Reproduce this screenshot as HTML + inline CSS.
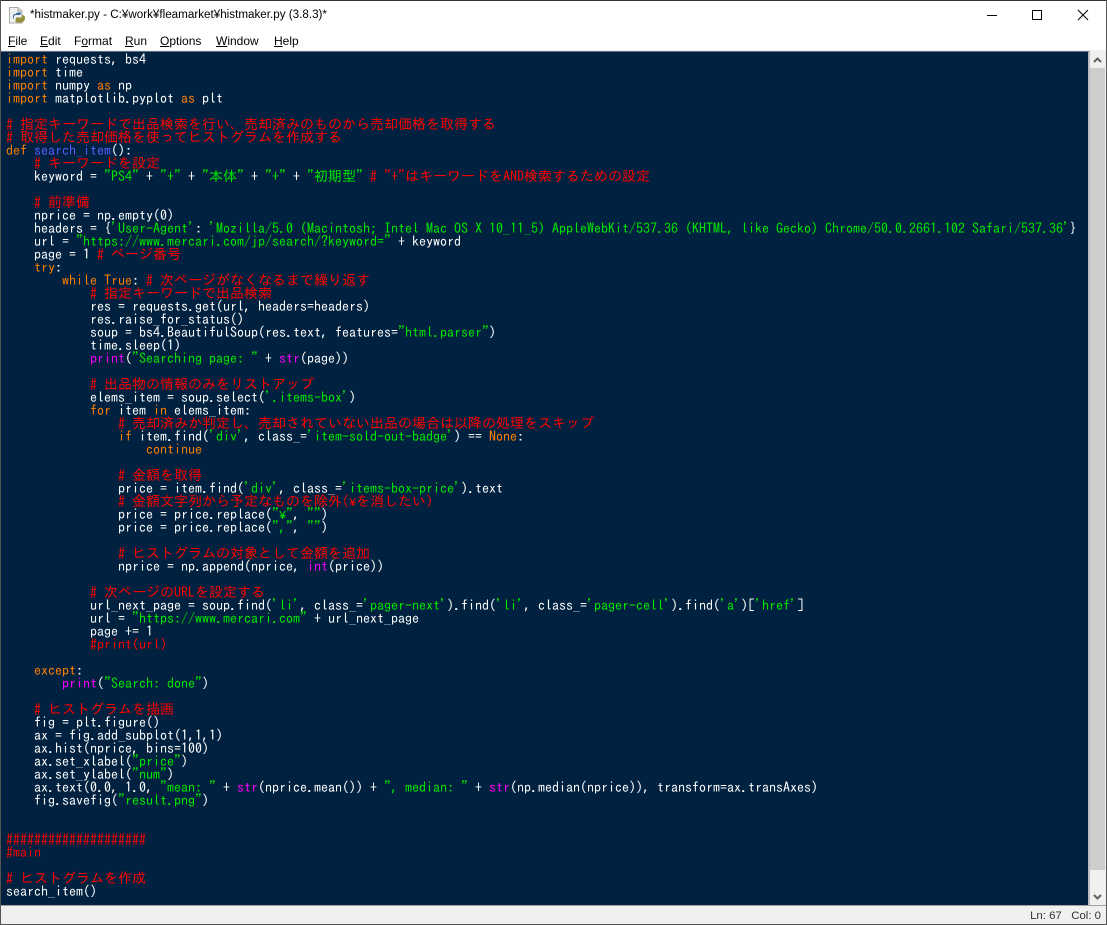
<!DOCTYPE html>
<html lang="ja"><head><meta charset="utf-8"><title>histmaker.py</title>
<style>
html,body{margin:0;padding:0;width:1107px;height:925px;overflow:hidden;background:#fff}
#win{position:absolute;left:0;top:0;width:1107px;height:925px;overflow:hidden;background:#fff}
#bt{position:absolute;left:0;top:0;width:1107px;height:1px;background:#333}
#bl{position:absolute;left:0;top:0;width:1px;height:925px;background:#555;z-index:5}
#br{position:absolute;right:0;top:0;width:1px;height:925px;background:#555;z-index:5}
#bb{position:absolute;left:0;top:924px;width:1107px;height:1px;background:#555;z-index:5}
#title{position:absolute;left:30px;top:6px;font:11.65px/18px "Liberation Sans","Noto Sans CJK JP",sans-serif;color:#000;white-space:pre}
#menu span{position:absolute;top:33px;font:12px/16px "Liberation Sans",sans-serif;color:#000}
#menu u{text-decoration:underline}
#band{position:absolute;left:1px;top:50px;width:1105px;height:1px;background:#f0f0f0}
#ed{position:absolute;left:1px;top:51px;width:1089px;height:854px;background:#002240;border-top:1px solid #607080;border-right:2px solid #b8bec4;box-sizing:border-box}
#code{position:absolute;left:5px;top:1px;margin:0;font:14px/13px "IPAGothic","Noto Sans CJK JP",monospace;color:#fff;white-space:pre}
.k{color:#ff7f00}.c{color:#f00}.s{color:#00e800}.b{color:#f0f}.d{color:#5a5aff}
.y{display:inline-block;width:7px;height:0;font:12px/0 "Liberation Mono",monospace;text-align:center}
#sb{position:absolute;left:1090px;top:51px;width:16px;height:854px;background:#f0f0f0}
#th{position:absolute;left:0;top:17px;width:15px;height:802px;background:#cdcdcd}
#st{position:absolute;left:1px;top:905px;width:1105px;height:19px;background:#f0f0f0;border-top:1px solid #a0a0a0;box-sizing:border-box}
#ln{position:absolute;right:5px;top:3px;font:11.4px/14px "Liberation Sans",sans-serif;color:#333;white-space:pre}
</style></head><body><div id="win">
<div id="bt"></div><div id="bl"></div><div id="br"></div><div id="bb"></div>
<svg style="position:absolute;left:8px;top:6px" width="18" height="18" viewBox="0 0 18 18"><path d="M1.5 1.5H10L14 5V17H1.5Z" fill="#eef0f2" stroke="#a8a8a8"/><path d="M10 1.5V5H14" fill="#d8d8d8" stroke="#a8a8a8"/><path d="M6 13V10.5Q6 9 8 9H11Q13 9 13 7.5V6.5H10Q8 6.5 8 8H7Q5 8 5 10.5T6 13Z" fill="#3d6a9c"/><path d="M8 12.5V11.5H14V9Q17 9 17 12T14 16.5H9Q7.5 16.5 7.5 15V13.5Q7.5 12.5 8 12.5Z" fill="#96903a"/></svg>
<div id="title">*histmaker.py - C:¥work¥fleamarket¥histmaker.py (3.8.3)*</div>
<svg style="position:absolute;left:980px;top:0" width="127" height="32" viewBox="0 0 127 32" fill="none" stroke="#000" shape-rendering="crispEdges"><path d="M7 15.5H17"/><rect x="52.5" y="10.5" width="9" height="9"/><path d="M98 10L108 20M108 10L98 20" shape-rendering="auto"/></svg>
<div id="menu"><span style="left:8px"><u>F</u>ile</span><span style="left:40px"><u>E</u>dit</span><span style="left:74px">F<u>o</u>rmat</span><span style="left:125px"><u>R</u>un</span><span style="left:160px"><u>O</u>ptions</span><span style="left:216px"><u>W</u>indow</span><span style="left:274px"><u>H</u>elp</span></div>
<div id="band"></div>
<div id="ed"><pre id="code"><span class="k">import</span> requests, bs4
<span class="k">import</span> time
<span class="k">import</span> numpy <span class="k">as</span> np
<span class="k">import</span> matplotlib.pyplot <span class="k">as</span> plt

<span class="c"># 指定キーワードで出品検索を行い、売却済みのものから売却価格を取得する</span>
<span class="c"># 取得した売却価格を使ってヒストグラムを作成する</span>
<span class="k">def</span> <span class="d">search_item</span>():
    <span class="c"># キーワードを設定</span>
    keyword = <span class="s">"PS4"</span> + <span class="s">"+"</span> + <span class="s">"本体"</span> + <span class="s">"+"</span> + <span class="s">"初期型"</span> <span class="c"># "+"はキーワードをAND検索するための設定</span>

    <span class="c"># 前準備</span>
    nprice = np.empty(0)
    headers = {<span class="s">'User-Agent'</span>: <span class="s">'Mozilla/5.0 (Macintosh; Intel Mac OS X 10_11_5) AppleWebKit/537.36 (KHTML, like Gecko) Chrome/50.0.2661.102 Safari/537.36'</span>}
    url = <span class="s">"https://www.mercari.com/jp/search/?keyword="</span> + keyword
    page = 1 <span class="c"># ページ番号</span>
    <span class="k">try</span>:
        <span class="k">while True</span>: <span class="c"># 次ページがなくなるまで繰り返す</span>
            <span class="c"># 指定キーワードで出品検索</span>
            res = requests.get(url, headers=headers)
            res.raise_for_status()
            soup = bs4.BeautifulSoup(res.text, features=<span class="s">"html.parser"</span>)
            time.sleep(1)
            <span class="b">print</span>(<span class="s">"Searching page: "</span> + <span class="b">str</span>(page))

            <span class="c"># 出品物の情報のみをリストアップ</span>
            elems_item = soup.select(<span class="s">'.items-box'</span>)
            <span class="k">for</span> item <span class="k">in</span> elems_item:
                <span class="c"># 売却済みか判定し、売却されていない出品の場合は以降の処理をスキップ</span>
                <span class="k">if</span> item.find(<span class="s">'div'</span>, class_=<span class="s">'item-sold-out-badge'</span>) == <span class="k">None</span>:
                    <span class="k">continue</span>

                <span class="c"># 金額を取得</span>
                price = item.find(<span class="s">'div'</span>, class_=<span class="s">'items-box-price'</span>).text
                <span class="c"># 金額文字列から予定なものを除外(<span class="y">¥</span>を消したい)</span>
                price = price.replace(<span class="s">"<span class="y">¥</span>"</span>, <span class="s">""</span>)
                price = price.replace(<span class="s">","</span>, <span class="s">""</span>)

                <span class="c"># ヒストグラムの対象として金額を追加</span>
                nprice = np.append(nprice, <span class="b">int</span>(price))

            <span class="c"># 次ページのURLを設定する</span>
            url_next_page = soup.find(<span class="s">'li'</span>, class_=<span class="s">'pager-next'</span>).find(<span class="s">'li'</span>, class_=<span class="s">'pager-cell'</span>).find(<span class="s">'a'</span>)[<span class="s">'href'</span>]
            url = <span class="s">"https://www.mercari.com"</span> + url_next_page
            page += 1
            <span class="c">#print(url)</span>

    <span class="k">except</span>:
        <span class="b">print</span>(<span class="s">"Search: done"</span>)

    <span class="c"># ヒストグラムを描画</span>
    fig = plt.figure()
    ax = fig.add_subplot(1,1,1)
    ax.hist(nprice, bins=100)
    ax.set_xlabel(<span class="s">"price"</span>)
    ax.set_ylabel(<span class="s">"num"</span>)
    ax.text(0.0, 1.0, <span class="s">"mean: "</span> + <span class="b">str</span>(nprice.mean()) + <span class="s">", median: "</span> + <span class="b">str</span>(np.median(nprice)), transform=ax.transAxes)
    fig.savefig(<span class="s">"result.png"</span>)


<span class="c">####################</span>
<span class="c">#main</span>

<span class="c"># ヒストグラムを作成</span>
search_item()
</pre></div>
<div id="sb"><div id="th"></div>
<svg style="position:absolute;left:0;top:0" width="16" height="854" fill="none" stroke="#606060" stroke-width="2"><path d="M4 11L7.5 7.5L11 11"/><path d="M4 844L7.5 847.5L11 844"/></svg></div>
<div id="st"><div id="ln">Ln: 67   Col: 0</div></div>
</div></body></html>
